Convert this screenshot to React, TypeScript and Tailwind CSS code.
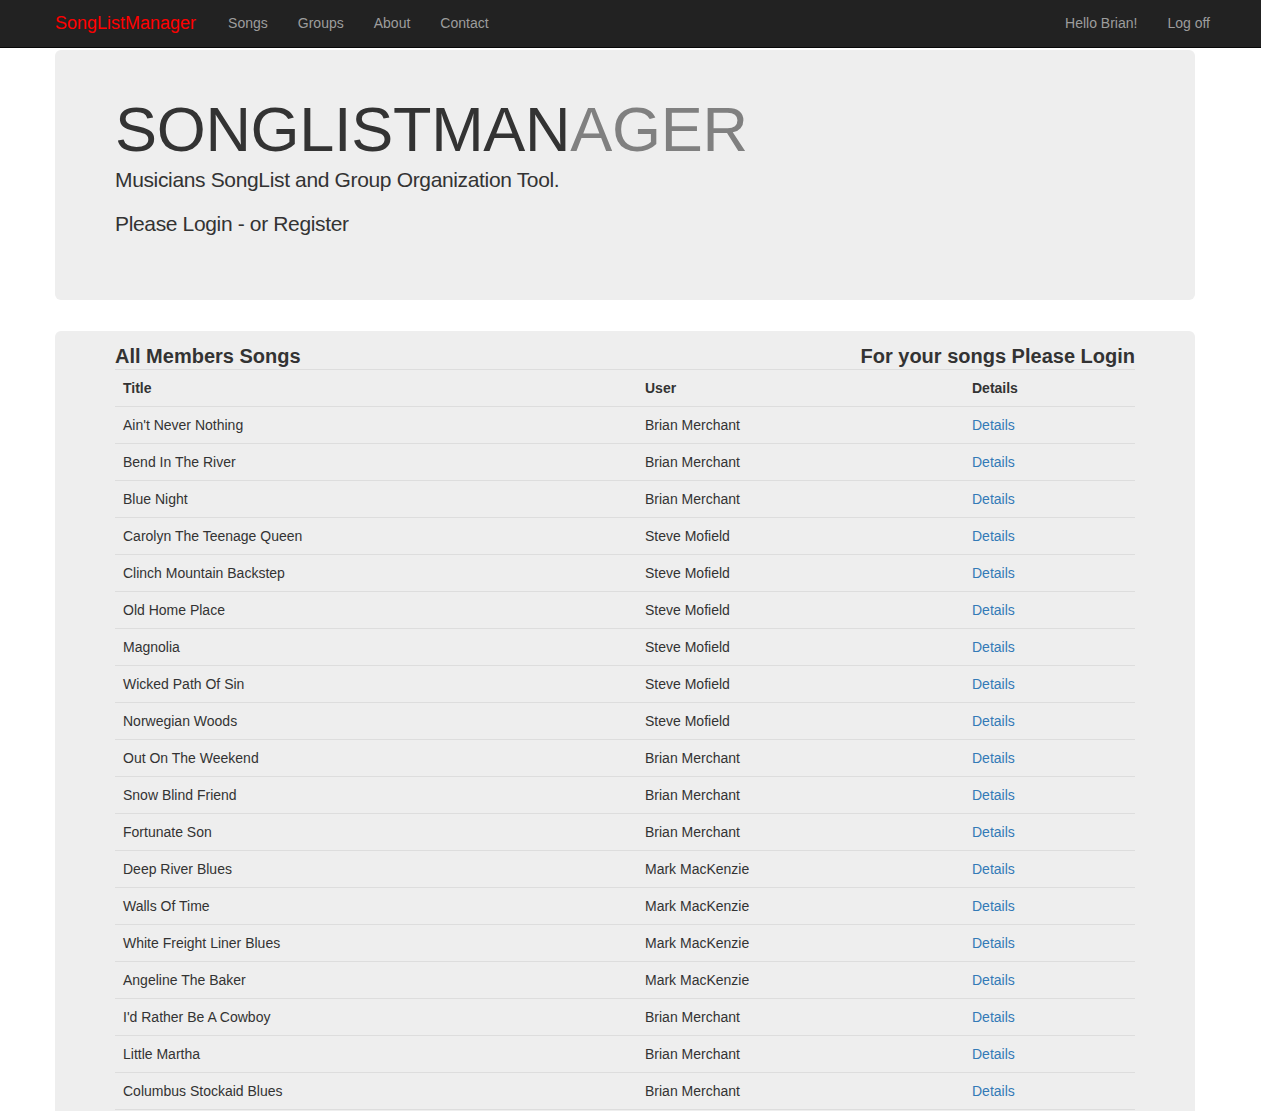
import React from "react";

const songs: [string, string][] = [
  ["Ain't Never Nothing", "Brian Merchant"],
  ["Bend In The River", "Brian Merchant"],
  ["Blue Night", "Brian Merchant"],
  ["Carolyn The Teenage Queen", "Steve Mofield"],
  ["Clinch Mountain Backstep", "Steve Mofield"],
  ["Old Home Place", "Steve Mofield"],
  ["Magnolia", "Steve Mofield"],
  ["Wicked Path Of Sin", "Steve Mofield"],
  ["Norwegian Woods", "Steve Mofield"],
  ["Out On The Weekend", "Brian Merchant"],
  ["Snow Blind Friend", "Brian Merchant"],
  ["Fortunate Son", "Brian Merchant"],
  ["Deep River Blues", "Mark MacKenzie"],
  ["Walls Of Time", "Mark MacKenzie"],
  ["White Freight Liner Blues", "Mark MacKenzie"],
  ["Angeline The Baker", "Mark MacKenzie"],
  ["I'd Rather Be A Cowboy", "Brian Merchant"],
  ["Little Martha", "Brian Merchant"],
  ["Columbus Stockaid Blues", "Brian Merchant"],
];

export default function App() {
  return (
    <div className="min-h-screen bg-white text-[14px] text-[#333] font-['Liberation_Sans',Arial,sans-serif]">
      <nav className="h-[48px] bg-[#222] border-b border-[#080808]">
        <div className="w-[1170px] ml-[40px] px-[15px] flex items-center h-full">
          <a className="text-[18px] text-[#ff0000] mr-[17px]">SongListManager</a>
          <ul className="flex text-[14px] text-[#9d9d9d]">
            <li className="px-[15px]">Songs</li>
            <li className="px-[15px]">Groups</li>
            <li className="px-[15px]">About</li>
            <li className="px-[15px]">Contact</li>
          </ul>
          <ul className="flex ml-auto text-[14px] text-[#9d9d9d] -mr-[30px]">
            <li className="px-[15px]">Hello Brian!</li>
            <li className="px-[15px]">Log off</li>
          </ul>
        </div>
      </nav>
      <div className="w-[1170px] ml-[40px] px-[15px] pt-[2px]">
        <div className="bg-[#eee] rounded-[6px] h-[250px] px-[60px] pt-[45px]">
          <h1 className="text-[63px] leading-[69px] tracking-[-0.3px] text-[#333]">
            SONGLISTMAN<span className="text-[#808080]">AGER</span>
          </h1>
          <p className="text-[21px] leading-[30px] font-light tracking-[-0.35px] mt-[1px]">Musicians SongList and Group Organization Tool.</p>
          <p className="text-[21px] leading-[30px] font-light tracking-[-0.35px] mt-[14px]">Please Login - or Register</p>
        </div>
        <div className="bg-[#eee] rounded-[6px] mt-[31px] px-[60px] pt-[12px] pb-[20px]">
          <div className="flex justify-between items-end h-[26px]">
            <h3 className="text-[20px] font-bold leading-[26px]">All Members Songs</h3>
            <h3 className="text-[20px] font-bold leading-[26px]">For your songs Please Login</h3>
          </div>
          <table className="w-full border-collapse">
            <thead>
              <tr className="border-t border-[#ddd]">
                <th className="text-left font-bold px-[8px] py-[8px] leading-[20px] w-[522px] border-b border-[#ddd]">Title</th>
                <th className="text-left font-bold px-[8px] py-[8px] leading-[20px] w-[327px] border-b border-[#ddd]">User</th>
                <th className="text-left font-bold px-[8px] py-[8px] leading-[20px] border-b border-[#ddd]">Details</th>
              </tr>
            </thead>
            <tbody>
              {songs.map(([t, u]) => (
                <tr key={t} className="border-b border-[#ddd]">
                  <td className="px-[8px] py-[8px] leading-[20px]">{t}</td>
                  <td className="px-[8px] py-[8px] leading-[20px]">{u}</td>
                  <td className="px-[8px] py-[8px] leading-[20px] text-[#337ab7]">Details</td>
                </tr>
              ))}
            </tbody>
          </table>
        </div>
      </div>
    </div>
  );
}
